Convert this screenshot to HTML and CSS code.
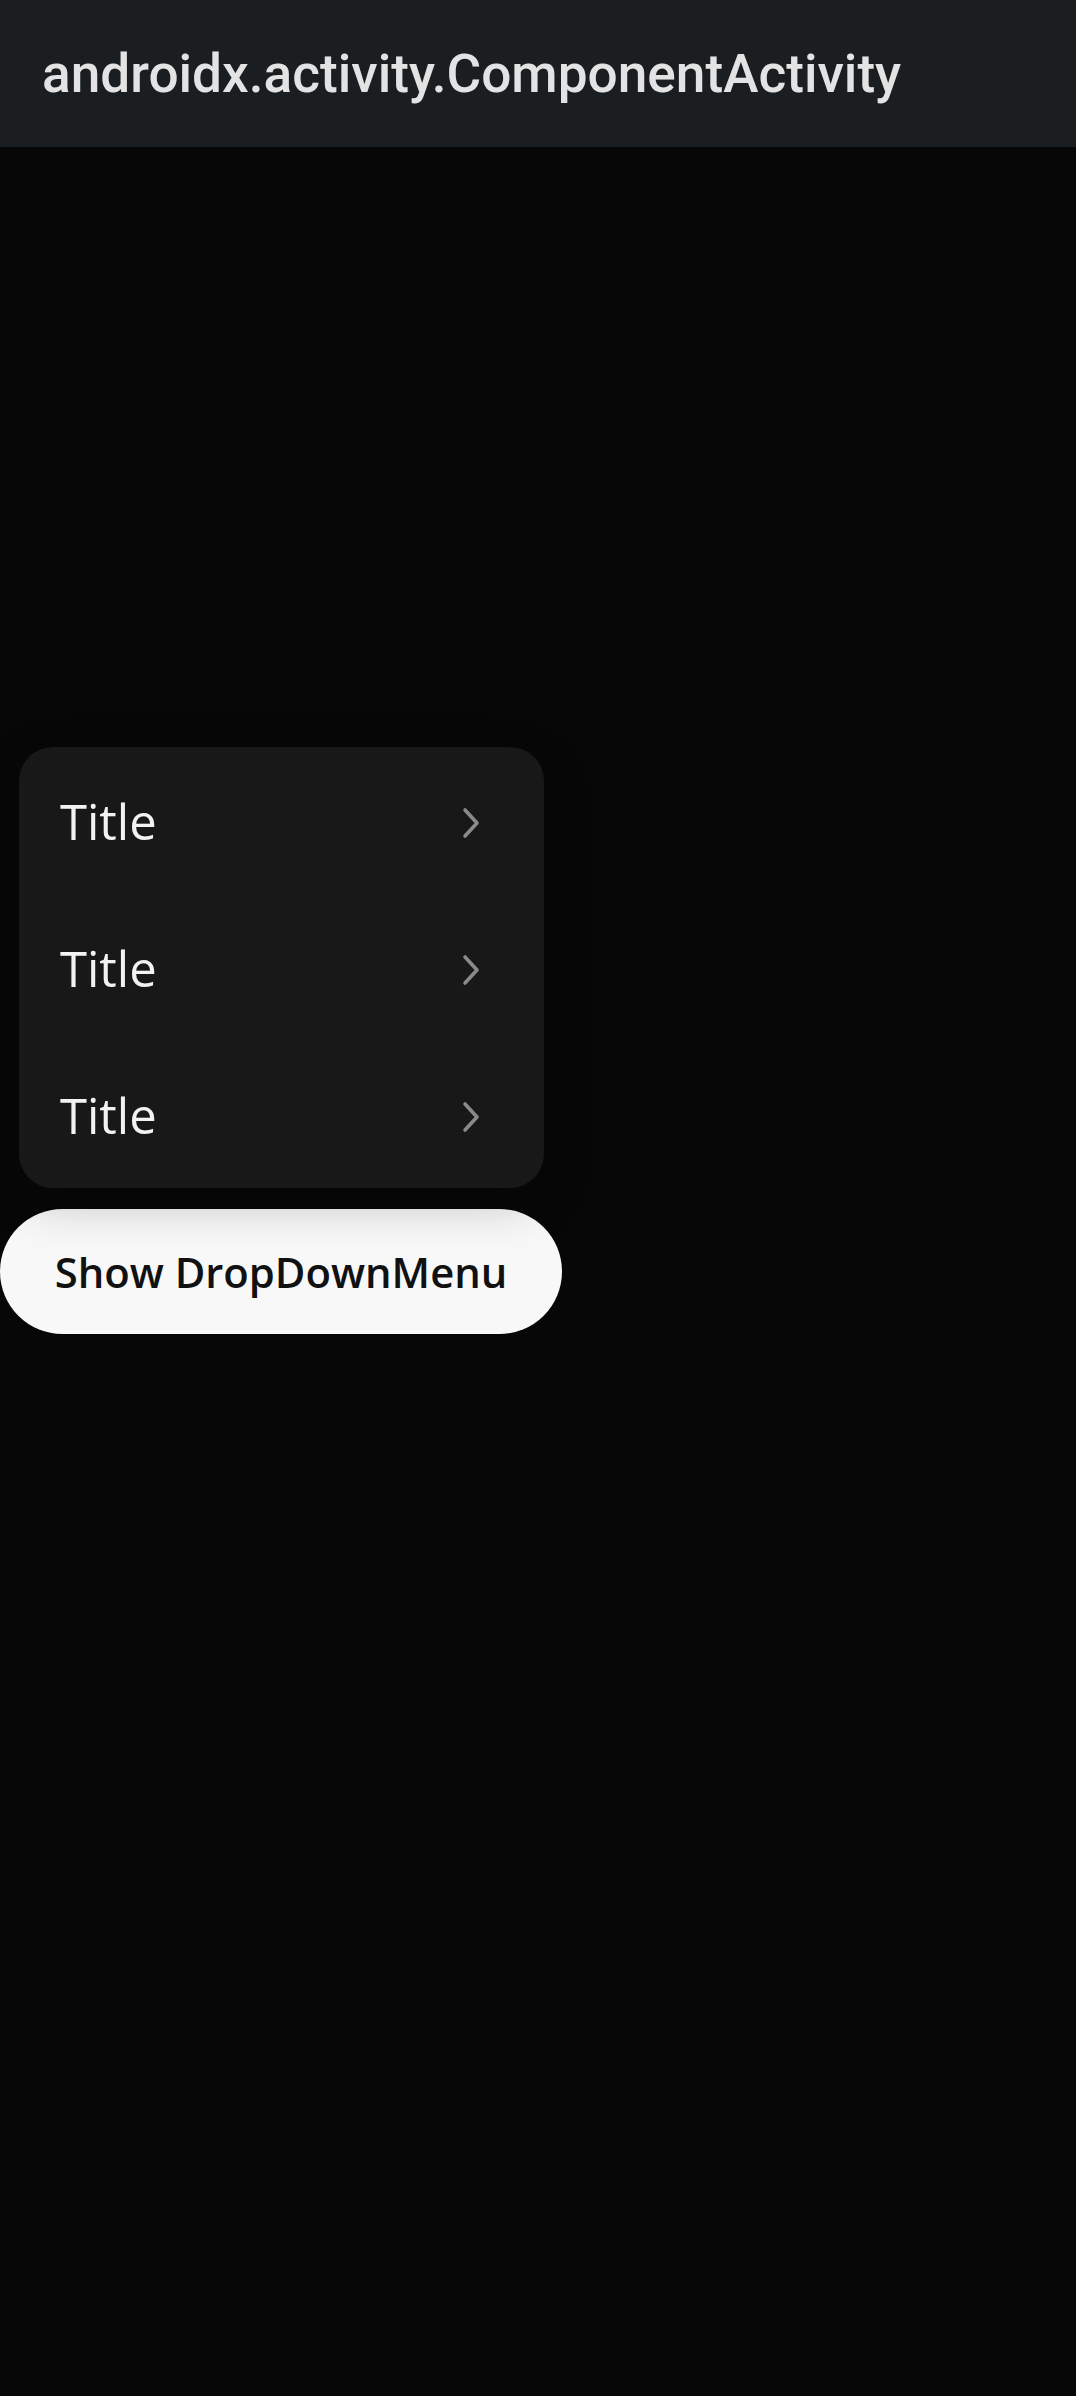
FILE: index.html
```html
<!DOCTYPE html>
<html>
<head>
<meta charset="utf-8">
<link rel="stylesheet" href="styles.css">
</head>
<body>
<header class="app-bar">
  <h1 class="app-title">androidx.activity.ComponentActivity</h1>
</header>
<main class="content">
  <div class="menu">
    <div class="menu-item"><span class="menu-label">Title</span><svg class="chevron" viewBox="0 0 20 32" width="20" height="32"><path d="M4 3 L16 16 L4 29" fill="none" stroke="#8a8a8a" stroke-width="3.6" stroke-linecap="round" stroke-linejoin="round"/></svg></div>
    <div class="menu-item"><span class="menu-label">Title</span><svg class="chevron" viewBox="0 0 20 32" width="20" height="32"><path d="M4 3 L16 16 L4 29" fill="none" stroke="#8a8a8a" stroke-width="3.6" stroke-linecap="round" stroke-linejoin="round"/></svg></div>
    <div class="menu-item"><span class="menu-label">Title</span><svg class="chevron" viewBox="0 0 20 32" width="20" height="32"><path d="M4 3 L16 16 L4 29" fill="none" stroke="#8a8a8a" stroke-width="3.6" stroke-linecap="round" stroke-linejoin="round"/></svg></div>
  </div>
  <button class="show-btn">Show DropDownMenu</button>
</main>
</body>
</html>
```
FILE: styles.css
```css
html, body {
  margin: 0;
  padding: 0;
  background: #070707;
  height: 100%;
}
body {
  font-family: "Open Sans", "Noto Sans", sans-serif;
}
.app-bar {
  height: 147px;
  background: #1b1e21;
  display: flex;
  align-items: center;
  padding-left: 42px;
  box-sizing: border-box;
}
.app-title {
  margin: 0;
  font-family: Roboto, "Noto Sans", sans-serif;
  font-weight: 500;
  font-size: 53.2px;
  color: #e3e3e3;
  letter-spacing: 0;
  line-height: 1;
  padding-top: 2px;
}
.content {
  display: flex;
  flex-direction: column;
  align-items: flex-start;
  padding-top: 600px;
}
.menu {
  position: relative;
  z-index: 1;
  margin-left: 19px;
  width: 525px;
  background: #181818;
  border-radius: 34px;
  box-shadow: 0 16px 50px rgba(0, 0, 0, 0.22);
  display: flex;
  flex-direction: column;
}
.menu-item {
  height: 147px;
  display: flex;
  align-items: center;
  justify-content: space-between;
  padding: 0 63px 0 41px;
}
.menu-label {
  font-size: 49px;
  color: #f2f2f2;
  line-height: 1;
  padding-top: 2px;
}
.chevron {
  display: block;
  margin-top: 4px;
}
.show-btn {
  margin-top: 21px;
  width: 562px;
  height: 125px;
  border: none;
  border-radius: 63px;
  background: #f8f8f8;
  color: #111111;
  font-family: "Open Sans", "Noto Sans", sans-serif;
  font-weight: 600;
  font-size: 41.8px;
  padding: 0;
  line-height: 1;
}
```
